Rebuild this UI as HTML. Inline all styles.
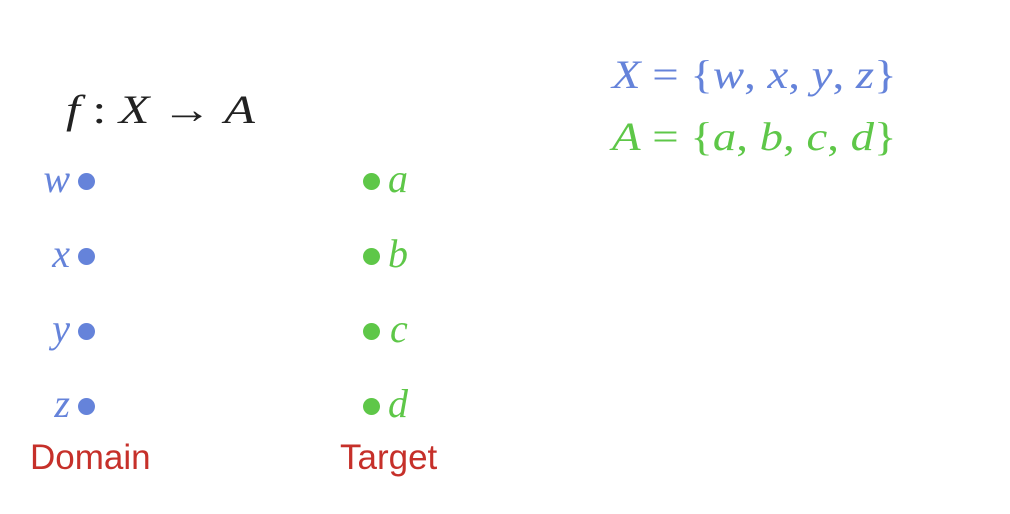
<!DOCTYPE html>
<html><head><meta charset="utf-8"><style>
body{margin:0;width:1010px;height:514px;background:#fff;position:relative;overflow:hidden;font-family:"Liberation Serif",serif}
.t{position:absolute;white-space:nowrap;line-height:1}
.i{font-style:italic}
.b{color:#6583DA}.g{color:#5EC748}
.d{position:absolute;width:17px;height:17px;border-radius:50%}
.db{background:#6583DA}.dg{background:#5EC748}
.r{position:absolute;color:#C6302A;font-family:"Liberation Sans",sans-serif;font-size:35px;line-height:1}
.v{position:absolute;width:40px;text-align:right;font-size:40px;font-style:italic;line-height:1}
.s{transform-origin:0 0}
</style></head><body>
<div class="t s" style="left:66px;top:90px;font-size:40px;color:#222;transform:scaleX(1.25)"><span class="i">f</span> : <span class="i">X</span> → <span class="i">A</span></div>
<div class="t b s" style="left:612px;top:55px;font-size:40px;transform:scaleX(1.17)"><span class="i">X</span> = {<span class="i">w</span>, <span class="i">x</span>, <span class="i">y</span>, <span class="i">z</span>}</div>
<div class="t g s" style="left:612px;top:117px;font-size:40px;transform:scaleX(1.17)"><span class="i">A</span> = {<span class="i">a</span>, <span class="i">b</span>, <span class="i">c</span>, <span class="i">d</span>}</div>

<div class="v b" style="left:30px;top:159px">w</div>
<div class="v b" style="left:30px;top:234px">x</div>
<div class="v b" style="left:30px;top:309px">y</div>
<div class="v b" style="left:30px;top:384px">z</div>
<div class="d db" style="left:78px;top:173px"></div>
<div class="d db" style="left:78px;top:248px"></div>
<div class="d db" style="left:78px;top:323px"></div>
<div class="d db" style="left:78px;top:398px"></div>

<div class="d dg" style="left:363px;top:173px"></div>
<div class="d dg" style="left:363px;top:248px"></div>
<div class="d dg" style="left:363px;top:323px"></div>
<div class="d dg" style="left:363px;top:398px"></div>
<div class="t i g" style="left:388px;top:159px;font-size:40px">a</div>
<div class="t i g" style="left:388px;top:234px;font-size:40px">b</div>
<div class="t i g" style="left:390px;top:309px;font-size:40px">c</div>
<div class="t i g" style="left:388px;top:384px;font-size:40px">d</div>

<div class="r" style="left:30px;top:440px">Domain</div>
<div class="r" style="left:340px;top:440px">Target</div>
</body></html>
